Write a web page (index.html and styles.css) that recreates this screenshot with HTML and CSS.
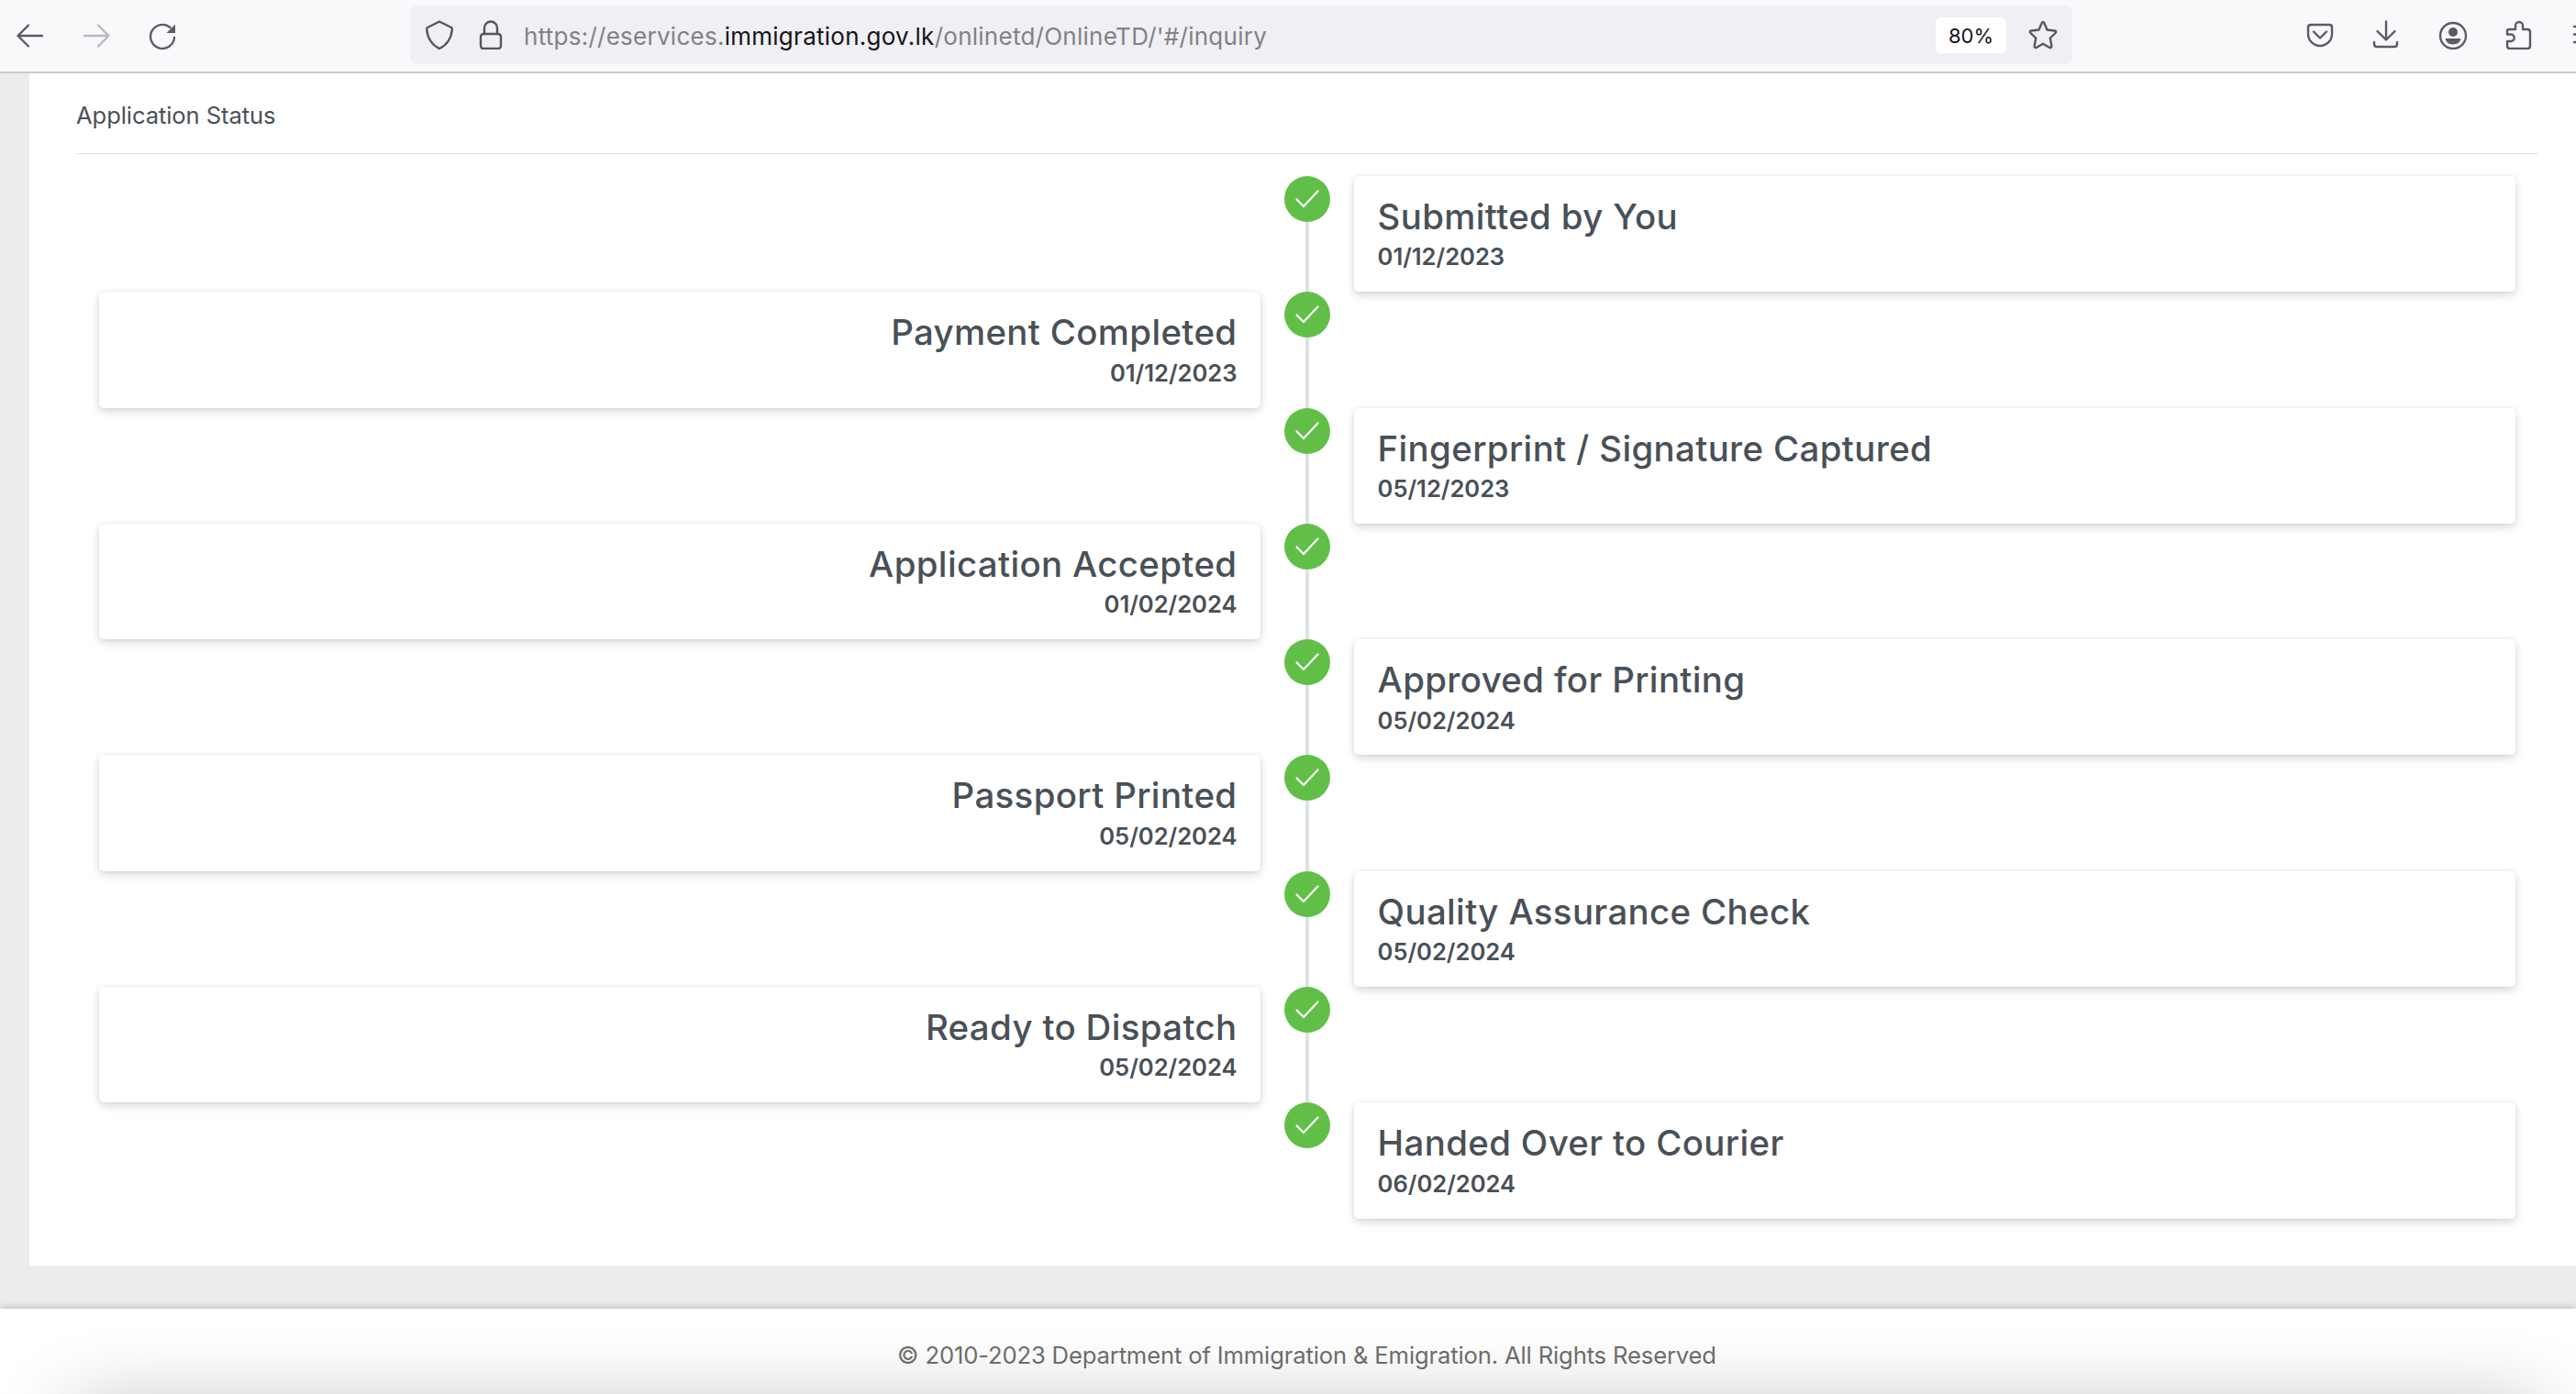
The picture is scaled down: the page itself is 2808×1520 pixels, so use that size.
FILE: index.html
```html
<!DOCTYPE html>
<html lang="en">
<head>
  <meta charset="UTF-8">
  <title>Application Status</title>
  <link rel="stylesheet" href="styles.css">
</head>
<body>
  <header class="toolbar">
    <div class="nav-buttons">
      <svg class="icon" viewBox="0 0 32 32"><path d="M29 17H3M14 5.500L2.500 17L14 28.500"/></svg>
      <svg class="icon disabled" viewBox="0 0 32 32"><path d="M3 17H29M18 5.500L29.500 17L18 28.500"/></svg>
      <svg class="icon" viewBox="0 0 32 32"><path d="M29 19A13 13 0 1 1 24.500 8"/><path class="solid" d="M30 4.500V14H20.500Z"/></svg>
    </div>
    <div class="url-bar">
      <svg class="icon dark" viewBox="0 0 32 32"><path d="M16 1.500L29 8Q30 8.500 29.800 10C29 20 25 26.500 16 31C7 26.500 3 20 2.200 10Q2 8.500 3 8Z"/></svg>
      <svg class="icon dark lock" viewBox="0 0 32 32"><rect x="5" y="15" width="22" height="16" rx="3"/><path d="M9 15V8.500a7 7 0 0 1 14 0V15"/></svg>
      <span class="url">https://eservices.<b>immigration.gov.lk</b>/onlinetd/OnlineTD/'#/inquiry</span>
      <span class="zoom-level">80%</span>
      <svg class="icon dark" viewBox="0 0 32 32"><path d="M14.700 3Q16 0.800 17.300 3L20.500 10.500L28.700 11.500Q31.300 12 29.500 14L23.800 19.500L25.300 28Q25.500 30.800 23 29.800L16 25.700L9 29.800Q6.500 30.800 6.700 28L8.200 19.500L2.500 14Q0.700 12 3.300 11.500L11.500 10.500Z"/></svg>
    </div>
    <div class="toolbar-actions">
      <svg class="icon" viewBox="0 0 32 32"><path d="M6 5H26Q29 5 29 8V15A13 13 0 0 1 3 15V8Q3 5 6 5ZM9 12.500L16 19.500L23 12.500"/></svg>
      <svg class="icon" viewBox="0 0 32 32"><path d="M16 1.500V20.500M6.500 12L16 21.500L25.500 12M3 24V26Q3 29 6 29H25Q28 29 28 26V24"/></svg>
      <svg class="icon" viewBox="-1 0 32 32"><circle cx="16" cy="17" r="14"/><circle class="solid" cx="16" cy="13" r="5"/><path class="solid" d="M7.500 20H24.500Q23 26.500 16 26.500T7.500 20Z"/></svg>
      <svg class="icon" viewBox="-1 0 32 32"><path d="M5 10H12V6a4 4 0 0 1 8 0V10H25Q28 10 28 13V28Q28 31 25 31H6Q3 31 3 28V23H7a3.700 3.700 0 0 0 0-7.500H3V12Q3 10 5 10Z"/></svg>
      <svg class="icon" viewBox="0 0 32 32"><path d="M5 7H28M5 15.500H28M5 24H28"/></svg>
    </div>
  </header>

  <main class="content">
    <h5 class="page-title">Application Status</h5>
    <div class="timeline" id="timeline"></div>
  </main>

  <footer class="footer">© 2010-2023 Department of Immigration &amp; Emigration. All Rights Reserved</footer>

  <script>
    const events = [
      ['Submitted by You', '01/12/2023'],
      ['Payment Completed', '01/12/2023'],
      ['Fingerprint / Signature Captured', '05/12/2023'],
      ['Application Accepted', '01/02/2024'],
      ['Approved for Printing', '05/02/2024'],
      ['Passport Printed', '05/02/2024'],
      ['Quality Assurance Check', '05/02/2024'],
      ['Ready to Dispatch', '05/02/2024'],
      ['Handed Over to Courier', '06/02/2024']
    ];

    document.getElementById('timeline').innerHTML = events.map(([title, date]) => `
      <div class="event">
        <div class="separator">
          <span class="marker"><svg viewBox="0 0 26 20"><path d="M1.500 10.500L9 18L24.500 1.500"/></svg></span>
          <span class="connector"></span>
        </div>
        <div class="card">
          <div class="card-title">${title}</div>
          <div class="card-date">${date}</div>
        </div>
      </div>
    `).join('');
  </script>
</body>
</html>
```
FILE: styles.css
```css
* {
  box-sizing: border-box;
}
body {
  margin: 0;
  height: 1520px;
  overflow: hidden;
  display: flex;
  flex-direction: column;
  background: #ececec;
  color: #495057;
  font-family: Inter, sans-serif;
  font-size: 25.6px;
}

/* browser toolbar */
.toolbar {
  display: flex;
  flex: none;
  height: 80px;
  padding-top: 6px;
  background: #f9f9fb;
  border-bottom: 2px solid #cccccf;
}
.icon {
  flex: none;
  width: 32px;
  height: 32px;
  fill: none;
  stroke: #5b5b66;
  stroke-width: 2.4;
  stroke-linecap: round;
  stroke-linejoin: round;
}
.icon .solid {
  fill: #5b5b66;
  stroke: none;
}
.icon.dark {
  stroke: #57565b;
}
.icon.disabled {
  opacity: 0.4;
}
.nav-buttons {
  display: flex;
  flex: none;
  align-items: center;
  gap: 40px;
  width: 447px;
  height: 64px;
  padding-left: 17px;
}
.url-bar {
  display: flex;
  flex: none;
  align-items: center;
  width: 1812px;
  height: 64px;
  padding: 0 16px;
  background: #f0eff4;
  border-radius: 8px;
}
.lock {
  margin-left: 24px;
}
.url {
  flex: 1;
  margin-left: 20px;
  padding-top: 2px;
  color: #828187;
  font-size: 26px;
  letter-spacing: 0.26px;
  white-space: nowrap;
}
.url b {
  color: #15141a;
  font-weight: 400;
}
.zoom-level {
  width: 77px;
  height: 39px;
  margin-right: 24px;
  background: #fff;
  border-radius: 6px;
  color: #15141a;
  font-size: 22px;
  line-height: 40px;
  text-align: center;
}
.toolbar-actions {
  display: flex;
  align-items: center;
  gap: 40px;
  height: 64px;
  padding-left: 254px;
  overflow: hidden;
}

/* application status */
.content {
  flex: none;
  height: 1300px;
  margin-left: 32px;
  padding: 0 42px 0 51px;
  background: #fff;
}
.page-title {
  height: 88px;
  margin: 0;
  border-bottom: 1px solid #dedfe1;
  font-size: 25.6px;
  font-weight: 400;
  letter-spacing: -0.1px;
  line-height: 92px;
}
.timeline {
  padding: 24px 24px 0 25px;
}
.event {
  display: grid;
  grid-template-columns: 1fr 102px 1fr;
  grid-template-rows: 100%;
  height: 126.3px;
}
.separator {
  display: flex;
  flex-direction: column;
  align-items: center;
  grid-area: 1 / 2;
}
.marker {
  display: flex;
  flex: none;
  align-items: center;
  justify-content: center;
  width: 50px;
  height: 50px;
  background: #61bf47;
  border-radius: 50%;
}
.marker svg {
  width: 26px;
  height: 20px;
  fill: none;
  stroke: #fff;
  stroke-width: 2.2;
  stroke-linecap: round;
}
.connector {
  flex: 1;
  width: 4px;
  background: #dee2e6;
}
.event:last-child .connector {
  display: none;
}
.card {
  grid-area: 1 / 3;
  padding: 25px 25.6px 0;
  background: #fff;
  border-radius: 5px;
  box-shadow: 0 6px 16px rgba(0,0,0,0.03), 0 0 3px rgba(0,0,0,0.06), 0 3px 10px rgba(0,0,0,0.14);
}
.event:nth-child(even) .card {
  grid-area: 1 / 1;
  text-align: right;
}
.card-title {
  font-size: 38.4px;
  font-weight: 500;
  letter-spacing: 0.36px;
  line-height: 38.4px;
}
.card-date {
  margin-top: 6px;
  font-weight: 600;
  letter-spacing: -0.05px;
  line-height: 38px;
}

.footer {
  flex: none;
  position: relative;
  height: 93px;
  margin-top: 47px;
  padding-left: 41px;
  overflow: hidden;
  background: #fff;
  box-shadow: 0 0 8px rgba(0,0,0,0.3);
  color: #70706b;
  letter-spacing: -0.14px;
  line-height: 102px;
  text-align: center;
}
/* shade rising from the bottom edge of the window */
.footer::after {
  content: "";
  position: absolute;
  left: 80px;
  right: 40px;
  top: 113px;
  height: 60px;
  box-shadow: 0 0 90px rgba(0,0,0,0.33);
}
```
